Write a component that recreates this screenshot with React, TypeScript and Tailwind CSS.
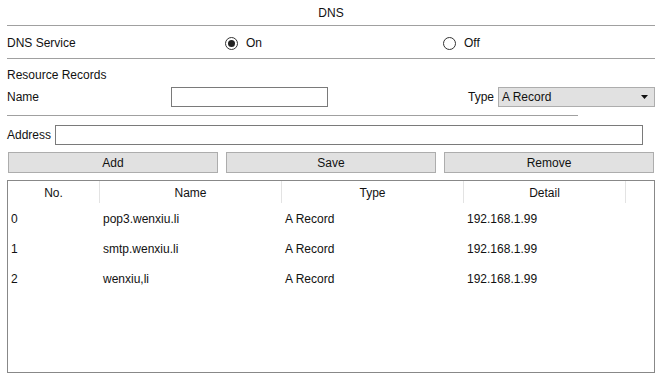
import React from "react";

const rows = [
  { no: "0", name: "pop3.wenxiu.li", type: "A Record", detail: "192.168.1.99" },
  { no: "1", name: "smtp.wenxiu.li", type: "A Record", detail: "192.168.1.99" },
  { no: "2", name: "wenxiu,li", type: "A Record", detail: "192.168.1.99" },
];

function Radio({ checked, label }: { checked?: boolean; label: string }) {
  return (
    <label className="flex items-center gap-[8px]">
      <span className="flex h-[13px] w-[13px] items-center justify-center rounded-full border border-[#333]">
        {checked && <span className="h-[7px] w-[7px] rounded-full bg-[#222]" />}
      </span>
      <span>{label}</span>
    </label>
  );
}

function Btn({ children }: { children: React.ReactNode }) {
  return (
    <button className="h-[21px] w-[210px] border border-[#adadad] bg-[#e1e1e1] text-[12px] text-[#111]">
      {children}
    </button>
  );
}

export default function App() {
  return (
    <div
      className="h-[379px] w-[655px] overflow-hidden bg-white text-[12px] text-[#111]"
      style={{ fontFamily: '"Liberation Sans", Arial, sans-serif' }}
    >
      {/* title */}
      <div className="ml-[7px] flex h-[25px] items-center justify-center pt-[1px]">DNS</div>
      <div className="ml-[7px] border-t border-[#a0a0a0]" />

      {/* service on/off */}
      <div className="ml-[7px] flex h-[32px] items-center pt-[2px]">
        <div className="w-[218px]">DNS Service</div>
        <div className="w-[218px]">
          <Radio checked label="On" />
        </div>
        <Radio label="Off" />
      </div>
      <div className="ml-[7px] border-t border-[#a0a0a0]" />

      {/* resource records */}
      <div className="ml-[7px] flex h-[28px] items-center pt-[3px]">Resource Records</div>
      <div className="ml-[7px] flex h-[20px] items-center">
        <div className="w-[164px]">Name</div>
        <div className="h-[20px] w-[157px] border border-[#7a7a7a]" />
        <div className="ml-[140px] w-[30px]">Type</div>
        <div className="flex h-[20px] w-[157px] items-center justify-between border border-[#adadad] bg-[#e1e1e1] pl-[3px] pr-[6px]">
          <span>A Record</span>
          <svg width="7" height="4" viewBox="0 0 7 4">
            <path d="M0 0h7L3.5 4z" fill="#111" />
          </svg>
        </div>
      </div>
      <div className="ml-[7px] mt-[8px] w-[571px] border-t border-[#a0a0a0]" />

      <div className="ml-[7px] mt-[9px] flex h-[20px] items-center">
        <div className="w-[48px]">Address</div>
        <div className="h-[20px] w-[588px] border border-[#7a7a7a]" />
      </div>

      {/* actions */}
      <div className="ml-[8px] mt-[7px] flex gap-[8px]">
        <Btn>Add</Btn>
        <Btn>Save</Btn>
        <Btn>Remove</Btn>
      </div>

      {/* records table */}
      <div className="ml-[7px] mt-[7px] h-[193px] w-[648px] border border-[#888]">
        <div className="flex h-[22px] items-center">
          <div className="w-[91px] pt-[1px] text-center">No.</div>
          <div className="h-[22px] w-px bg-[#e3e3e3]" />
          <div className="w-[181px] pt-[1px] text-center">Name</div>
          <div className="h-[22px] w-px bg-[#e3e3e3]" />
          <div className="w-[181px] pt-[1px] text-center">Type</div>
          <div className="h-[22px] w-px bg-[#e3e3e3]" />
          <div className="w-[161px] pt-[1px] text-center">Detail</div>
          <div className="h-[22px] w-px bg-[#e3e3e3]" />
        </div>
        {rows.map((r) => (
          <div key={r.no} className="flex h-[30px] items-center pt-[1px]">
            <div className="w-[92px] pl-[3px]">{r.no}</div>
            <div className="w-[182px] pl-[3px]">{r.name}</div>
            <div className="w-[182px] pl-[3px]">{r.type}</div>
            <div className="w-[162px] pl-[3px]">{r.detail}</div>
          </div>
        ))}
      </div>
    </div>
  );
}
